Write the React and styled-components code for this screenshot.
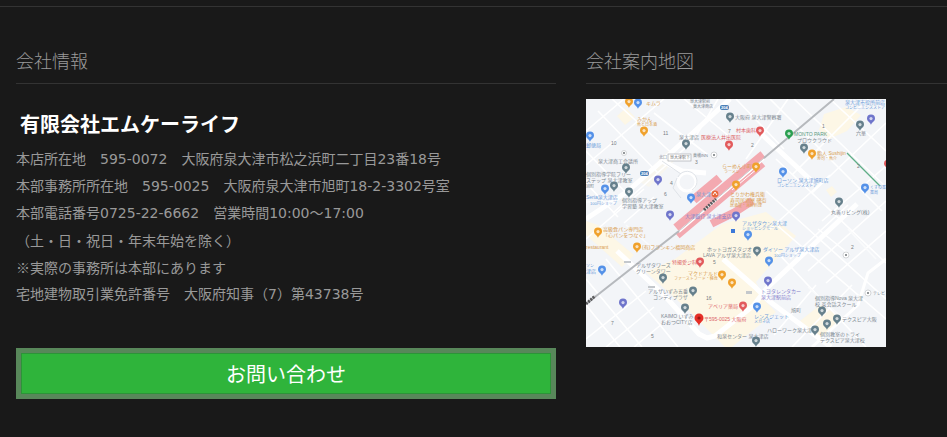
import styled, { createGlobalStyle } from 'styled-components';

const GlobalStyle = createGlobalStyle`
  * {
    box-sizing: border-box;
  }

  body {
    margin: 0;
    background-color: #191919;
    color: #999;
    font-family: 'DejaVu Sans', 'Noto Sans CJK JP', sans-serif;
    font-size: 14px;
  }
`;

const Footer = styled.footer`
  margin-top: 6px;
  border-top: 1px solid #333;
  padding: 39px 0 32px 16px;
`;

const Columns = styled.div`
  display: grid;
  grid-template-columns: 58% 1fr;
  gap: 30px;
`;

const Column = styled.section`
  min-width: 0;
`;

const Heading = styled.h2`
  margin: 0 0 15px;
  padding-bottom: 9px;
  border-bottom: 1px solid #333;
  font-family: 'Noto Sans CJK JP', sans-serif;
  font-size: 18px;
  font-weight: 300;
  line-height: 28px;
`;

const CompanyName = styled.p`
  margin: 0 0 6px;
  padding: 9px 4px 0;
  color: #fff;
  font-family: 'Noto Sans CJK JP', sans-serif;
  font-size: 20px;
  font-weight: 700;
  line-height: 32px;
`;

const Address = styled.address`
  margin-bottom: 40px;
  font-style: normal;
  line-height: 27px;
`;

const Line = styled.div`
  font-family: ${(props) => (props.$plain ? "'Noto Sans CJK JP', sans-serif" : 'inherit')};
`;

const ContactLink = styled.a`
  display: block;
  border: 5px solid #58875a;
  background-color: #2fb43b;
  box-shadow: inset 0 0 0 1px #2c9438;
  color: #fff;
  font-family: 'Noto Sans CJK JP', sans-serif;
  font-size: 20px;
  line-height: 41px;
  text-align: center;
  text-decoration: none;
`;

const MapImage = styled.svg`
  display: block;
  width: 300px;
  max-width: 100%;
  height: auto;
  font-family: 'Liberation Sans', 'Noto Sans CJK JP', sans-serif;
`;

const addressLines = [
  { text: '本店所在地　595-0072　大阪府泉大津市松之浜町二丁目23番18号' },
  { text: '本部事務所所在地　595-0025　大阪府泉大津市旭町18-2-3302号室' },
  { text: '本部電話番号0725-22-6662　営業時間10:00～17:00' },
  { text: '（土・日・祝日・年末年始を除く）', plain: true },
  { text: '※実際の事務所は本部にあります', plain: true },
  { text: '宅地建物取引業免許番号　大阪府知事（7）第43738号' },
];

const colors = {
  orange: '#f0a12c',
  blue: '#5491e8',
  slate: '#66808c',
  red: '#e25a5c',
  purple: '#6f75cb',
  green: '#2a9f50',
};

const inks = {
  orange: '#d9a052',
  blue: '#6c9bd8',
  slate: '#7c8790',
  red: '#dc6468',
  purple: '#8580cc',
  green: '#5d9c83',
};

// x, y of the pin head
const pins = [
  ['orange', 43, 3], ['blue', 52, 4], ['orange', 58, 32], ['blue', 4, 37],
  ['slate', 100, 45], ['slate', 144, 18], ['red', 143, 46], ['slate', 40, 69],
  ['purple', 72, 81], ['blue', 19, 90], ['slate', 28, 87], ['slate', 43, 93],
  ['blue', 105, 99], ['purple', 84, 116], ['red', 174, 32], ['green', 203, 35],
  ['slate', 218, 49], ['orange', 226, 55], ['slate', 274, 26], ['purple', 285, 20],
  ['orange', 170, 68], ['orange', 150, 86], ['blue', 197, 73], ['blue', 279, 89],
  ['slate', 253, 103], ['purple', 150, 117], ['red', 302, 65], ['orange', 12, 133],
  ['orange', 51, 148], ['blue', 16, 171], ['red', 114, 163], ['slate', 77, 179],
  ['orange', 136, 176], ['orange', 146, 184], ['slate', 107, 192], ['slate', 99, 209],
  ['purple', 37, 204], ['blue', 162, 136], ['slate', 171, 152], ['blue', 183, 162],
  ['purple', 182, 182], ['blue', 171, 208], ['red', 157, 207], ['slate', 236, 212],
  ['slate', 251, 220], ['slate', 241, 225], ['slate', 229, 231], ['slate', 170, 242],
];

// ink, x, y, size, text
const labels = [
  ['orange', 60, 6, 5, 'キムラ'],
  ['slate', 104, 4, 4, '泉大津駅前'],
  ['slate', 107, 9, 4, '東大津商店'],
  ['orange', 51, 22, 5, 'みかん'],
  ['orange', 51, 27, 4, '魚と日本酒'],
  ['slate', 93, 40, 5, '泉大津店'],
  ['red', 115, 40, 5, '医療法人井出医院'],
  ['slate', 149, 20, 5, '大阪府 泉大津警察署'],
  ['slate', 12, 64, 5, '泉大津商工会議所'],
  ['blue', 0, 48, 5, '郵便局'],
  ['slate', 0, 77, 5, '個別指導学院フリー'],
  ['slate', 0, 83, 5, 'ステップ 泉大津教室'],
  ['slate', 0, 89, 4, '旭町'],
  ['blue', 0, 100, 5, 'Seria泉大津店'],
  ['blue', 4, 106, 4, '100円ショップ'],
  ['slate', 36, 103, 5, '個別指導アップ'],
  ['slate', 36, 109, 5, '学習塾 泉大津教室'],
  ['slate', 73, 60, 4, '北口'],
  ['slate', 107, 58, 4, '東横INN'],
  ['red', 150, 33, 5, '村本歯科'],
  ['green', 208, 37, 5, 'MONTO PARK'],
  ['slate', 211, 43, 5, 'プロウクラウド'],
  ['slate', 270, 36, 5, '六華'],
  ['blue', 259, 5, 5, '泉大津市役所前店'],
  ['blue', 259, 10, 4, 'コンビニエンスストア'],
  ['orange', 231, 56, 5, '鮨人 Sushijin'],
  ['orange', 231, 61, 4, '寿司・魚介'],
  ['orange', 136, 69, 5, 'らーめん小町'],
  ['orange', 138, 74, 4, 'ラーメン'],
  ['orange', 144, 97, 5, 'とりかわ権兵衛'],
  ['orange', 144, 103, 5, '寿司居酒屋 磯街'],
  ['orange', 144, 108, 4, '居酒屋・海鮮料理'],
  ['blue', 191, 83, 5, 'ローソン 泉大津旭町店'],
  ['blue', 191, 88, 4, 'コンビニエンスストア'],
  ['blue', 284, 90, 4, 'くすの薬'],
  ['blue', 284, 95, 4, '薬局'],
  ['slate', 245, 115, 5, '丸善リビング(株)'],
  ['blue', 110, 97, 5, '泉大津'],
  ['purple', 99, 119, 5, '大津銀行 泉大津支店'],
  ['blue', 156, 126, 5, 'アルザタウン泉大津'],
  ['blue', 156, 131, 4, 'ショッピングモール'],
  ['orange', 17, 132, 5, '高級食パン専門店'],
  ['orange', 17, 138, 5, '「心パンをつなぐ」'],
  ['orange', 56, 150, 5, '(有)フランキン福岡商店'],
  ['orange', 0, 150, 5, 'restaurant'],
  ['blue', 0, 168, 4, 'ソン'],
  ['blue', 0, 174, 5, '津店'],
  ['slate', 50, 168, 5, 'アルザタワーズ'],
  ['slate', 50, 174, 5, 'グリーンタワー'],
  ['red', 86, 165, 5, '特撮愛ジ科'],
  ['slate', 121, 152, 5, 'ホットヨガスタジオ'],
  ['slate', 117, 158, 5, 'LAVA アルザ泉大津店'],
  ['blue', 177, 152, 5, 'ダイソー アルザ泉大津店'],
  ['blue', 188, 158, 4, '100円ショップ'],
  ['orange', 102, 176, 5, 'マクドナルド'],
  ['orange', 88, 181, 4, 'ファーストフード・軽食'],
  ['slate', 62, 194, 5, 'アルザいずみ五番'],
  ['slate', 67, 200, 5, 'コンディプラザ'],
  ['red', 122, 209, 5, 'アベリア薬局'],
  ['slate', 75, 219, 5, 'KAIMO いずみ'],
  ['slate', 75, 225, 5, 'おおつCITY店'],
  ['red', 118, 222, 5, '〒595-0025 大阪府'],
  ['slate', 131, 239, 5, '和泉センター 泉大津店'],
  ['purple', 175, 194, 5, 'トヨタレンタカー'],
  ['purple', 175, 200, 5, '泉大津駅前店'],
  ['blue', 168, 219, 5, 'レンズジェット'],
  ['blue', 168, 224, 4, 'メガネ店'],
  ['slate', 205, 213, 5, '旭町'],
  ['slate', 181, 233, 5, 'ハローワーク泉大津'],
  ['slate', 229, 201, 5, '個別指導Nova 泉大津'],
  ['slate', 229, 207, 5, '校 英会話スクール'],
  ['slate', 256, 222, 5, 'テクスピア大阪'],
  ['slate', 234, 237, 5, '個別教室のトライ'],
  ['slate', 234, 243, 5, 'テクスピア泉大津校'],
  ['slate', 287, 196, 4, 'テレビ'],
];

const numerals = [
  ['11', 77, 36], ['10', 25, 46], ['4', 84, 86], ['6', 78, 97], ['7', 142, 34],
  ['2', 165, 48], ['1', 236, 29], ['2', 271, 69], ['3', 109, 65], ['16', 120, 201],
  ['7', 25, 226], ['5', 65, 239], ['5', 127, 165], ['2', 265, 150],
];

const Pin = ({ color, x, y }) => (
  <g transform={`translate(${x} ${y})`}>
    <path d="M0 6C-.6 3.4-4 2.6-4-.4A4 4 0 0 1 4-.4C4 2.6.6 3.4 0 6Z" fill={color} />
    <circle cy="-.4" r="1.6" fill="#fff" opacity=".7" />
  </g>
);

const StationMap = () => (
  <MapImage viewBox="0 0 300 248" role="img" aria-label="会社案内地図">
    <rect width="300" height="248" fill="#f3f5f8" />

    {/* shopping blocks */}
    <g fill="#fdf7e6">
      <path d="M31 17l9-8 9 9-10 8zM0 122l12 4 36 30-12 12-36-32z" />
      <path d="M89 160l47-35 44-12 30 24-40 46 8 18 12 12-48 38-42-42-40-36z" />
      <path d="M238 15l22-7 15 8-14 16-18 8-10-9z" />
      <path d="M214 222l20-16 22 12-24 24zM240 91l6-4 5 6-6 5z" />
      <path d="M52 82l30-30 9 7-28 29z" opacity=".5" />
    </g>

    {/* side streets */}
    <g stroke="#fff" strokeWidth="1.6" fill="none">
      <path d="M0 66L26 44 78 0M0 32l38-32M27 114l80-72L132 0M0 140l58-50M38 124l30-26M160 60l42-60M206 76l92-92M226 94l74-70M236 122l64-55M184 130l60-54M204 160l58-54M222 172l78-70M240 184l60-52M188 236l42-50M206 248l60-62M0 240l60-48M20 248l48-40M48 248l34-28" />
      <path d="M0 52l46 48M12 12l60 62M26 0l64 58M68 14l54 42M98 0l46 38M0 84l32 34M150 0l48 50M184 0l112 112M208 0l92 88M190 60l110 104M180 92l120 108M186 122l114 98M190 152l90 96M20 160l72 88M0 180l56 68M0 206l34 42M244 0l56 52M232 130l32 26" />
      <path d="M0 103h28M40 126l30 26M222 188l38 34M262 130l28 30" stroke="#fafbfc" />
    </g>

    {/* main roads */}
    <g stroke="#fff" strokeWidth="5" fill="none" strokeLinejoin="round">
      <path d="M0 120l42-28L76 62 144 0" />
      <path d="M31 152l48 45 34 38 8 4 8-2 38-30 14-18 90-84" />
      <path d="M137 160l32 28 14 14 62 46M170 30l58 54M76 62l20 10 24 2" />
      <path d="M226 248l46-42 10-32 18-14" strokeWidth="3" />
      <circle cx="101" cy="83" r="9" strokeWidth="3" />
    </g>
    <path d="M76 62l19 13M92 78a10 10 0 1 1 14 13M91 79l-4 10 8 10" stroke="#dfe3e8" fill="none" />

    {/* platforms and railway */}
    <g stroke="#f3a9b0" strokeLinecap="square" fill="none">
      <path d="M130 82L111 98" strokeWidth="9" />
      <path d="M174 58L93 126" strokeWidth="8" />
      <path d="M175 67L94 135" strokeWidth="6" />
      <path d="M163 104l-14 9-20 10" strokeWidth="8" />
    </g>
    <path d="M178 60L93 133" stroke="#fff" strokeWidth="2" />
    <path d="M172 69L146 91M167 70L145 88" stroke="#fff" strokeWidth="1" />
    <path d="M248 0L178 59M93 132L0 205" stroke="#b6b9bd" strokeWidth="2" fill="none" />
    <path d="M178 59L93 132" stroke="#c9c4c8" strokeWidth="1" />
    <path d="M118 111l12-11M0 205l9-8" stroke="#5a5a5c" strokeWidth="3" strokeDasharray="2 1" />
    <path d="M261 54l33 33" stroke="#5fae86" strokeWidth="1.3" />

    {/* route shields */}
    <g fill="#4d80b8">
      <rect x="54" y="72" width="9" height="5" rx="2" />
      <rect x="134" y="6" width="9" height="5" rx="2" />
      <rect x="145" y="130" width="4" height="4" fill="#3c78d8" />
    </g>
    <g fill="#fff" fontSize="4" fontWeight="700">
      <text x="55" y="76">204</text>
      <text x="135" y="10">204</text>
    </g>
    <rect x="82" y="55" width="23" height="7" fill="#fff" stroke="#a9adb2" strokeWidth=".7" />
    <text x="84" y="60" fontSize="4" fill="#777">泉大津駅下</text>
    <g fill="#c4c8cc">
      <rect x="38" y="162" width="7" height="2" />
      <rect x="62" y="187" width="7" height="2" />
      <rect x="160" y="192" width="6" height="3" />
    </g>
    <circle cx="129" cy="95" r="3.4" fill="#e9683c" />
    <path d="M127 96l2-3 2 3" stroke="#fff" fill="none" />

    {/* unnamed places */}
    <g fill="#fff" stroke="#c3c6c9" strokeWidth=".7">
      <circle cx="38" cy="54" r="2.5" />
      <circle cx="128" cy="56" r="3" />
      <circle cx="260" cy="156" r="3" />
      <circle cx="282" cy="194" r="3" />
    </g>
    <g fill="#6f7479">
      <circle cx="38" cy="54" r="1" />
      <circle cx="128" cy="56" r="1" />
      <circle cx="260" cy="156" r="1" />
      <circle cx="282" cy="194" r="1" />
    </g>

    {labels.map(([ink, x, y, size, text]) => (
      <text key={`${x}-${y}`} x={x} y={y} fontSize={size} fill={inks[ink]}>{text}</text>
    ))}
    {numerals.map(([text, x, y]) => (
      <text key={`${x}-${y}`} x={x} y={y} fontSize="5" fill="#777d82">{text}</text>
    ))}
    {pins.map(([color, x, y]) => (
      <Pin key={`${x}-${y}`} color={colors[color]} x={x} y={y} />
    ))}

    {/* office */}
    <path d="M113 227c-.8-4-4.500-4.500-4.500-8a4.500 4.500 0 0 1 9 0c0 3.500-3.700 4-4.500 8z" fill="#e52f27" />
    <circle cx="113" cy="219" r="1.600" fill="#9c1712" />
  </MapImage>
);

const App = () => {
  return (
    <>
      <GlobalStyle />
      <Footer>
        <Columns>
          <Column>
            <Heading>会社情報</Heading>
            <CompanyName>有限会社エムケーライフ</CompanyName>
            <Address>
              {addressLines.map((line) => (
                <Line key={line.text} $plain={line.plain}>{line.text}</Line>
              ))}
            </Address>
            <ContactLink href="#contact">お問い合わせ</ContactLink>
          </Column>
          <Column>
            <Heading>会社案内地図</Heading>
            <StationMap />
          </Column>
        </Columns>
      </Footer>
    </>
  );
};

export default App;
